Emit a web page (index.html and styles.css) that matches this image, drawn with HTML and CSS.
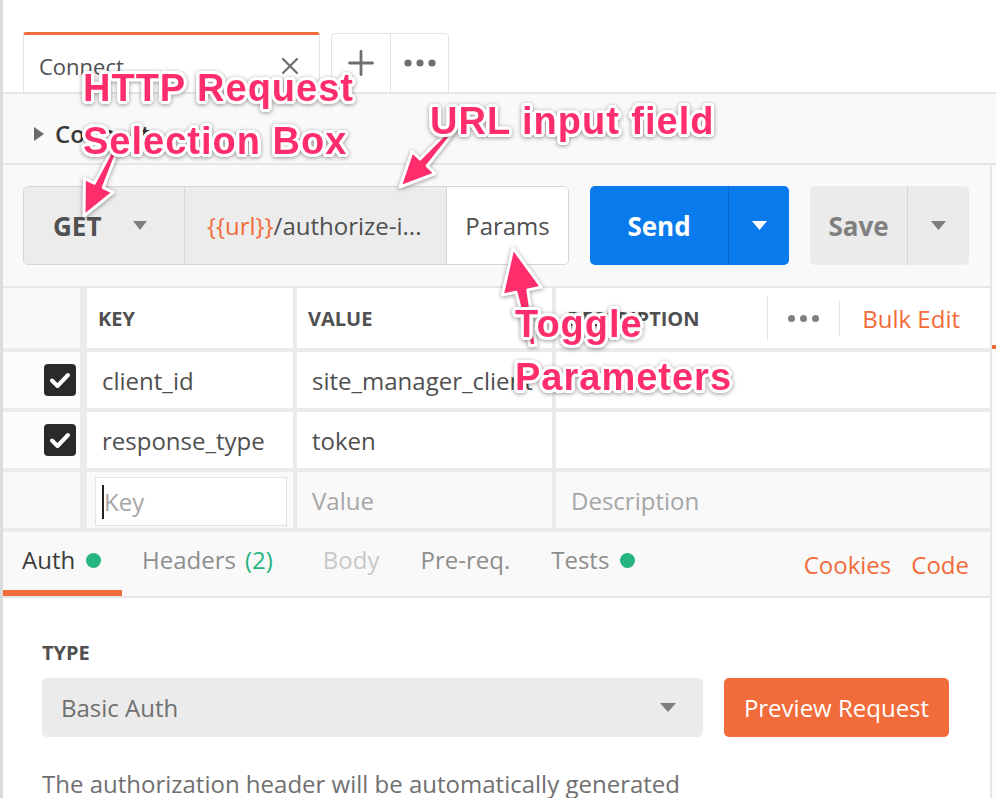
FILE: index.html
```html
<!DOCTYPE html>
<html lang="en">
<head>
<meta charset="utf-8">
<title>Request builder</title>
<link rel="stylesheet" href="styles.css">
</head>
<body>
<div class="app">
  <div class="tabbar">
    <div class="tab">
      <span class="tab-title">Connect</span>
      <svg class="ico" width="16" height="16" viewBox="0 0 16 16"><path d="M1 1L15 15M15 1L1 15" stroke="#6e6e6e" stroke-width="2.2" stroke-linecap="round"/></svg>
    </div>
    <div class="tabtools">
      <div class="tool"><svg width="26" height="26" viewBox="0 0 26 26"><path d="M13 1.5V24.5M1.5 13H24.5" stroke="#6e6e6e" stroke-width="2.8" stroke-linecap="round"/></svg></div>
      <div class="tool"><svg width="32" height="8" viewBox="0 0 32 8"><circle cx="4" cy="4" r="3.6" fill="#707070"/><circle cx="16" cy="4" r="3.6" fill="#707070"/><circle cx="28" cy="4" r="3.6" fill="#707070"/></svg></div>
    </div>
  </div>

  <div class="crow">
    <svg width="10" height="14" viewBox="0 0 10 14"><path d="M0 0L10 7L0 14Z" fill="#6a6a6a"/></svg>
    <span>Connect</span>
  </div>

  <div class="body">
    <div class="main">
      <div class="reqbar">
        <div class="urlgroup">
          <div class="method"><span>GET</span><svg width="14" height="9" viewBox="0 0 14 9"><path d="M0 0H14L7 9Z" fill="#7d7d7d"/></svg></div>
          <div class="url"><span class="var">{{url}}</span>/authorize-i...</div>
          <div class="params">Params</div>
        </div>
        <div class="send">
          <div class="lbl">Send</div>
          <div class="drop"><svg width="15" height="9" viewBox="0 0 15 9"><path d="M0 0H15L7.5 9Z" fill="#fff"/></svg></div>
        </div>
        <div class="save">
          <div class="lbl">Save</div>
          <div class="drop"><svg width="15" height="9" viewBox="0 0 15 9"><path d="M0 0H15L7.5 9Z" fill="#7d7d7d"/></svg></div>
        </div>
      </div>

      <div class="ptable">
        <div class="c chk hd"></div>
        <div class="c hd th">KEY</div>
        <div class="c hd th">VALUE</div>
        <div class="c hd th desc-h">
          <span class="dlabel">DESCRIPTION</span>
          <span class="vsep tall"></span>
          <span class="dots"><i></i><i></i><i></i></span>
          <span class="vsep"></span>
          <span class="bulk">Bulk Edit</span>
        </div>

        <div class="c chk"><svg width="32" height="32" viewBox="0 0 32 32"><rect width="32" height="32" rx="4" fill="#2a2a2a"/><path d="M8 16.5L13.5 22L24 11" fill="none" stroke="#fff" stroke-width="4" stroke-linecap="round" stroke-linejoin="round"/></svg></div>
        <div class="c td">client_id</div>
        <div class="c td">site_manager_client</div>
        <div class="c td"></div>

        <div class="c chk"><svg width="32" height="32" viewBox="0 0 32 32"><rect width="32" height="32" rx="4" fill="#2a2a2a"/><path d="M8 16.5L13.5 22L24 11" fill="none" stroke="#fff" stroke-width="4" stroke-linecap="round" stroke-linejoin="round"/></svg></div>
        <div class="c td">response_type</div>
        <div class="c td">token</div>
        <div class="c td"></div>

        <div class="c chk new"></div>
        <div class="c new keycell"><div class="keyinput"><span class="caret"></span><span class="ph">Key</span></div></div>
        <div class="c td new ph">Value</div>
        <div class="c td new ph">Description</div>
      </div>

      <div class="subtabs">
        <div class="stab active">Auth<span class="dot"></span></div>
        <div class="stab">Headers<span class="green">(2)</span></div>
        <div class="stab disabled">Body</div>
        <div class="stab">Pre-req.</div>
        <div class="stab">Tests<span class="dot"></span></div>
        <div class="stab link cookies">Cookies</div>
        <div class="stab link code">Code</div>
      </div>

      <div class="auth">
        <div class="type-label">TYPE</div>
        <div class="type-row">
          <div class="select"><span>Basic Auth</span><svg width="16" height="9" viewBox="0 0 16 9"><path d="M0 0H16L8 9Z" fill="#7d7d7d"/></svg></div>
          <div class="preview">Preview Request</div>
        </div>
        <p class="auth-desc">The authorization header will be automatically generated</p>
      </div>
    </div>
    <div class="strip"><div class="mark"></div></div>
  </div>

  <svg class="arrows" width="996" height="798" viewBox="0 0 996 798">
    <polygon points="117.5,151 103.3,187.6 113.2,192.4 84,216 84.4,178.4 94.3,183.2 112.5,149"/>
    <polygon points="454.5,131.5 427.2,166 435.1,173.6 400,187 412.1,151.4 420,159 450.5,128.5"/>
    <polygon points="536,345 527.8,289.9 541.5,287.1 513,248 502.3,295.1 516,292.3 530,346"/>
  </svg>
  <div class="note n1">HTTP Request<br>Selection Box</div>
  <div class="note n2">URL input field</div>
  <div class="note n3">Toggle<br>Parameters</div>
</div>
</body>
</html>
```

FILE: styles.css
```css
* { box-sizing: border-box; margin: 0; padding: 0; }
html, body { background: #fff; }
body {
  font-family: "Open Sans", "Liberation Sans", sans-serif;
  color: #505050;
  width: 996px;
  height: 798px;
  overflow: hidden;
}
.app {
  position: relative;
  width: 996px;
  height: 798px;
  border-left: 3px solid #dcdcdc;
  overflow: hidden;
}

/* top tab bar */
.tabbar {
  height: 94px;
  border-bottom: 2px solid #e6e6e6;
  display: flex;
  align-items: flex-end;
  padding-left: 20px;
  background: #fff;
}
.tab {
  width: 297px;
  height: 60px;
  border: 1px solid #e3e3e3;
  border-top: 3px solid #f26b3a;
  border-bottom: none;
  border-radius: 3px 3px 0 0;
  display: flex;
  align-items: center;
  justify-content: space-between;
  padding: 4px 21px 0 15px;
  background: #fff;
}
.tab-title { font-size: 22px; line-height: 24px; color: #505050; }
.tabtools {
  margin-left: 11px;
  display: flex;
  height: 59px;
  border: 1px solid #e3e3e3;
  border-bottom: none;
  border-radius: 4px 4px 0 0;
  background: #fff;
}
.tool { width: 58px; display: flex; align-items: center; justify-content: center; }
.tool + .tool { border-left: 1px solid #e3e3e3; width: 58px; }

/* collapsed row */
.crow {
  height: 71px;
  background: #f9f9f9;
  border-bottom: 2px solid #e6e6e6;
  display: flex;
  align-items: center;
  padding: 11px 0 0 31px;
  gap: 11px;
  font-size: 24px;
  line-height: 24px;
  font-weight: 600;
  color: #3a3a3a;
}

.body { display: flex; }
.main { flex: 1; border-right: 2px solid #e6e6e6; min-width: 0; }
.strip { width: 4px; background: #fafafa; }
.mark { margin-top: 180px; width: 4px; height: 4px; background: #f26b3a; }

/* request bar */
.reqbar {
  height: 121px;
  background: #f9f9f9;
  padding: 21px 0 21px 20px;
  display: flex;
  gap: 21px;
}
.urlgroup {
  display: flex;
  width: 546px;
  height: 79px;
  border: 1px solid #d6d6d6;
  border-radius: 5px;
  overflow: hidden;
}
.method {
  width: 161px;
  background: #ececec;
  border-right: 1px solid #d6d6d6;
  display: flex;
  align-items: center;
  padding-left: 29px;
  gap: 32px;
  font-size: 26px;
  font-weight: 700;
  color: #505050;
}
.url {
  width: 262px;
  background: #ececec;
  border-right: 1px solid #d6d6d6;
  display: flex;
  align-items: center;
  padding-left: 22px;
  font-size: 24px;
  color: #505050;
  white-space: nowrap;
}
.url .var { color: #f26b3a; }
.params {
  flex: 1;
  background: #fff;
  display: flex;
  align-items: center;
  justify-content: center;
  font-size: 24px;
  color: #505050;
}
.send, .save {
  display: flex;
  height: 79px;
  border-radius: 5px;
  font-size: 26px;
  font-weight: 700;
}
.send { width: 199px; background: #097bed; color: #fff; }
.save { width: 159px; background: #ebebeb; color: #808080; }
.send .lbl, .save .lbl {
  display: flex;
  align-items: center;
  justify-content: center;
}
.send .lbl { width: 139px; border-right: 1px solid #0868cf; }
.save .lbl { width: 98px; border-right: 1px solid #d6d6d6; }
.drop { flex: 1; display: flex; align-items: center; justify-content: center; }

/* params table */
.ptable {
  display: grid;
  grid-template-columns: 80px 206px 255px 1fr;
  grid-template-rows: 60px 56px 56px 56px;
  gap: 4px;
  background: #ebebeb;
  border-top: 2px solid #e6e6e6;
  padding-bottom: 4px;
}
.c {
  background: #fff;
  display: flex;
  align-items: center;
  font-size: 24px;
  color: #505050;
  white-space: nowrap;
  overflow: hidden;
}
.chk {
  border-right: 3px solid #ebebeb;
  justify-content: flex-end;
  padding-right: 4px;
  background: #fcfcfc;
}
.chk.hd { background: #f9f9f9; }
.th { font-size: 20px; font-weight: 700; padding-left: 11px; color: #505050; }
.td { padding-left: 15px; padding-right: 10px; }
.new { background: #f9f9f9; }
.ph { color: #a6a6a6; }
.desc-h { padding-right: 30px; }
.dlabel { flex: 1; }
.vsep { width: 1px; height: 34px; background: #e3e3e3; }
.vsep.tall { height: 44px; }
.dots { display: flex; gap: 5px; margin: 0 20px; }
.dots i { width: 7px; height: 7px; border-radius: 50%; background: #808080; display: block; }
.bulk { margin-left: 22px; color: #f26b3a; font-weight: 400; font-size: 24px; }
.keycell { padding: 5px 6px 2px 8px; align-items: stretch; }
.keyinput {
  flex: 1;
  background: #fff;
  border: 1px solid #e3e3e3;
  display: flex;
  align-items: center;
  padding-left: 6px;
}
.keyinput .caret { width: 2px; height: 34px; background: #222; }

/* sub tabs */
.subtabs {
  height: 66px;
  background: #f9f9f9;
  border-bottom: 2px solid #e6e6e6;
  display: flex;
  align-items: flex-start;
  padding-right: 21px;
}
.stab {
  padding-top: 16px;
  font-size: 24px;
  line-height: 24px;
  color: #8e8e8e;
  display: flex;
  align-items: center;
  white-space: nowrap;
  margin-left: 41px;
}
.stab.active {
  margin-left: 0;
  width: 119px;
  height: 64px;
  padding-left: 19px;
  align-items: flex-start;
  border-bottom: 6px solid #f26b3a;
  color: #3c3c3c;
}
.stab.active .dot { margin-top: 5px; }
.stab:nth-child(2) { margin-left: 20px; }
.stab:nth-child(3) { margin-left: 50px; }
.stab.disabled { color: #c8c8c8; }
.dot { width: 15px; height: 15px; border-radius: 50%; background: #26b47f; margin-left: 11px; display: block; }
.green { color: #26b47f; margin-left: 9px; }
.link { color: #f26b3a; padding-top: 21px; }
.cookies { margin-left: auto; }
.code { margin-left: 20px; }

/* auth */
.auth { padding: 45px 0 0 39px; background: #fff; height: 200px; }
.type-label { font-size: 20px; line-height: 20px; font-weight: 700; color: #505050; }
.type-row { display: flex; gap: 21px; margin-top: 15px; }
.select {
  width: 661px;
  height: 59px;
  background: #ebebeb;
  border-radius: 5px;
  display: flex;
  align-items: center;
  justify-content: space-between;
  padding: 0 27px 0 19px;
  font-size: 24px;
  color: #707070;
}
.preview {
  width: 225px;
  height: 59px;
  background: #f26b3a;
  border-radius: 5px;
  color: #fff;
  font-size: 24px;
  display: flex;
  align-items: center;
  justify-content: center;
}
.auth-desc { margin-top: 35px; font-size: 24px; line-height: 24px; color: #707070; white-space: nowrap; }

/* annotations */
.arrows {
  position: absolute;
  left: -3px;
  top: 0;
  pointer-events: none;
  filter: drop-shadow(0 1px 2px rgba(0,0,0,0.4));
}
.arrows polygon { fill: #fe2e6c; stroke: #fff; stroke-width: 3; stroke-linejoin: round; }
.note {
  position: absolute;
  font-family: "Liberation Sans", Arial, sans-serif;
  font-weight: 700;
  font-size: 38px;
  line-height: 53px;
  letter-spacing: 1px;
  color: #fe2e6c;
  white-space: nowrap;
  text-shadow:
    3px 0 0 #fff, -3px 0 0 #fff, 0 3px 0 #fff, 0 -3px 0 #fff,
    2.2px 2.2px 0 #fff, -2.2px 2.2px 0 #fff, 2.2px -2.2px 0 #fff, -2.2px -2.2px 0 #fff,
    3px 1.3px 0 #fff, -3px 1.3px 0 #fff, 3px -1.3px 0 #fff, -3px -1.3px 0 #fff,
    1.3px 3px 0 #fff, -1.3px 3px 0 #fff, 1.3px -3px 0 #fff, -1.3px -3px 0 #fff;
  filter: drop-shadow(0 1px 2px rgba(0,0,0,0.4));
}
.n1 { left: 80px; top: 62px; }
.n2 { left: 427px; top: 95px; }
.n3 { left: 512px; top: 298px; }
```
